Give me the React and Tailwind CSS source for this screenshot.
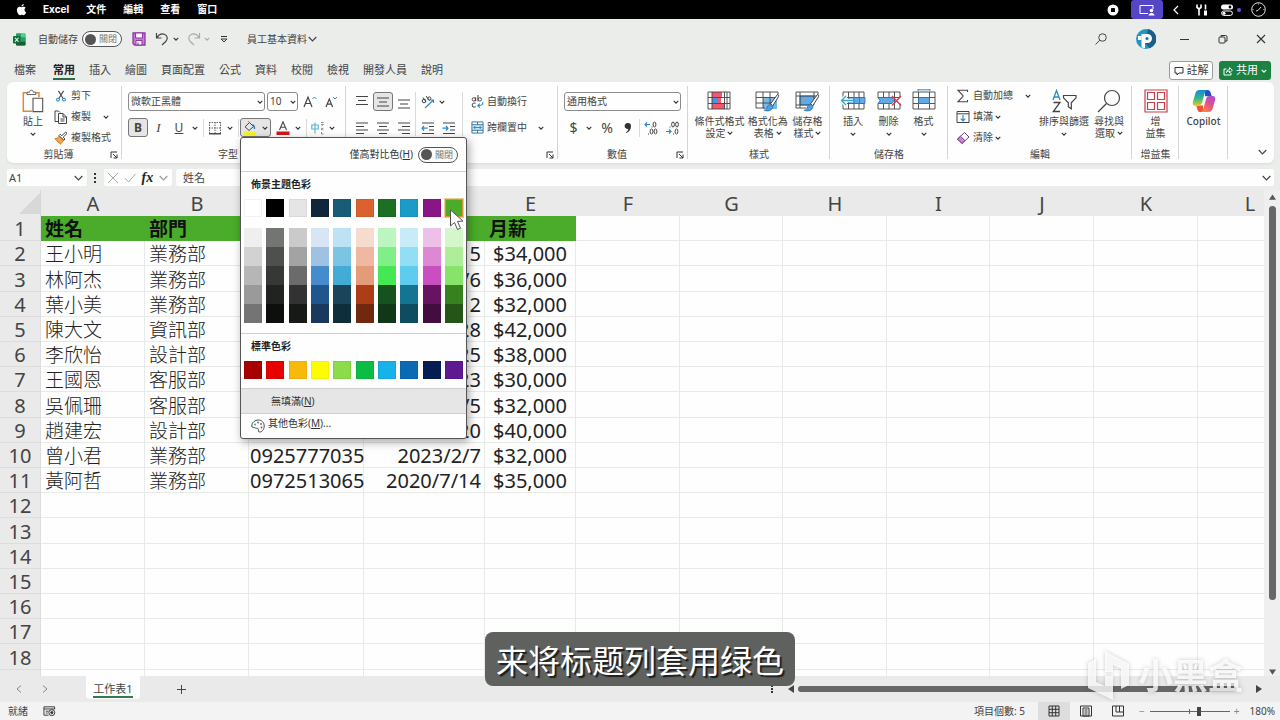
import React, { useState } from 'react';

const TABS = ['檔案', '常用', '插入', '繪圖', '頁面配置', '公式', '資料', '校閱', '檢視', '開發人員', '說明'];

const COLUMNS = [
  { name: 'A', width: 'w-[104px]' },
  { name: 'B', width: 'w-[104px]' },
  { name: 'C', width: 'w-[115px]' },
  { name: 'D', width: 'w-[121px]' },
  { name: 'E', width: 'w-[91px]' },
  { name: 'F', width: 'w-[104px]' },
  { name: 'G', width: 'w-[103px]' },
  { name: 'H', width: 'w-[104px]' },
  { name: 'I', width: 'w-[103px]' },
  { name: 'J', width: 'w-[104px]' },
  { name: 'K', width: 'w-[104px]' },
  { name: 'L', width: 'w-[104px]' },
];

const ROWS = [
  ['姓名', '部門', ' ', ' ', '月薪'],
  ['王小明', '業務部', '', '2021/3/15', '$34,000'],
  ['林阿杰', '業務部', '', '2020/5/6', '$36,000'],
  ['葉小美', '業務部', '', '2022/8/12', '$32,000'],
  ['陳大文', '資訊部', '', '2019/9/28', '$42,000'],
  ['李欣怡', '設計部', '', '2020/4/25', '$38,000'],
  ['王國恩', '客服部', '', '2023/6/23', '$30,000'],
  ['吳佩珊', '客服部', '', '2022/7/5', '$32,000'],
  ['趙建宏', '設計部', '', '2019/10/20', '$40,000'],
  ['曾小君', '業務部', '0925777035', '2023/2/7', '$32,000'],
  ['黃阿哲', '業務部', '0972513065', '2020/7/14', '$35,000'],
];

const THEME_COLORS = [
  { base: 'bg-[#ffffff]', shades: ['bg-[#efefef]', 'bg-[#d1d2d1]', 'bg-[#b5b6b5]', 'bg-[#999a99]', 'bg-[#737473]'] },
  { base: 'bg-[#000000]', shades: ['bg-[#737573]', 'bg-[#4e504e]', 'bg-[#363836]', 'bg-[#212321]', 'bg-[#0d0f0d]'] },
  { base: 'bg-[#e4e5e4]', shades: ['bg-[#c9cac9]', 'bg-[#a2a3a2]', 'bg-[#6a6b6a]', 'bg-[#313231]', 'bg-[#171917]'] },
  { base: 'bg-[#10263a]', shades: ['bg-[#d7e5f5]', 'bg-[#9fc2e3]', 'bg-[#468bcc]', 'bg-[#20568e]', 'bg-[#193a5c]'] },
  { base: 'bg-[#195c78]', shades: ['bg-[#bce2f3]', 'bg-[#7cc5e2]', 'bg-[#43acd6]', 'bg-[#194459]', 'bg-[#0e2e3b]'] },
  { base: 'bg-[#db622e]', shades: ['bg-[#f6dbcf]', 'bg-[#efb9a1]', 'bg-[#e49b79]', 'bg-[#ad3d16]', 'bg-[#70280f]'] },
  { base: 'bg-[#1c6f23]', shades: ['bg-[#bbf6c0]', 'bg-[#81ef88]', 'bg-[#45e752]', 'bg-[#16521d]', 'bg-[#103717]'] },
  { base: 'bg-[#1a9cc9]', shades: ['bg-[#c8ecf7]', 'bg-[#92dff3]', 'bg-[#5dccee]', 'bg-[#147592]', 'bg-[#0e4d60]'] },
  { base: 'bg-[#8a1587]', shades: ['bg-[#edc0e8]', 'bg-[#dc88d5]', 'bg-[#c94ebf]', 'bg-[#681262]', 'bg-[#440d40]'] },
  { base: 'bg-[#4aac2a]', shades: ['bg-[#d5f5cb]', 'bg-[#b0ed9b]', 'bg-[#88e36a]', 'bg-[#37811f]', 'bg-[#265518]'], selected: true },
];

const STANDARD_COLORS = [
  'bg-[#a60000]', 'bg-[#e60000]', 'bg-[#f7b90b]', 'bg-[#fdff00]', 'bg-[#8bdc4b]',
  'bg-[#0cbd45]', 'bg-[#16b2e8]', 'bg-[#0a6ab4]', 'bg-[#041d52]', 'bg-[#5f1991]',
];

/* ---------- icons ---------- */

const Chevron = ({ className = 'w-[6px] h-[6px]', color = '#333' }) => (
  <svg viewBox="0 0 8 8" className={`shrink-0 ${className}`} fill="none" stroke={color} strokeWidth="1.5">
    <path d="M1 2.5 4 5.5 7 2.5" />
  </svg>
);

const WideChevron = ({ className = 'w-[9px] h-[6px]', color = '#444' }) => (
  <svg viewBox="0 0 9 6" className={`shrink-0 ${className}`} fill="none" stroke={color} strokeWidth="1.2">
    <path d="M.7 1 4.5 4.8 8.3 1" />
  </svg>
);

const Launcher = () => (
  <svg viewBox="0 0 8 8" className="w-[8px] h-[8px]" fill="none" stroke="#333">
    <path d="M1 7V1h6M3 3l4 4M7 3.500V7H3.500" />
  </svg>
);

const AppleIcon = () => (
  <svg viewBox="0 0 24 24" className="w-[13px] h-[13px]" fill="#fff">
    <path d="M17.500 12.700c0-2.600 2.100-3.800 2.200-3.900-1.200-1.800-3.100-2-3.700-2-1.600-.2-3.100.9-3.900.9-.8 0-2-.9-3.400-.9C7 6.800 5.300 7.800 4.400 9.400c-1.900 3.200-.5 8 1.300 10.600.9 1.300 2 2.700 3.300 2.700 1.400-.1 1.900-.9 3.500-.9s2 .9 3.500.8c1.400 0 2.300-1.300 3.200-2.600 1-1.500 1.400-2.900 1.500-3-.1 0-3.200-1.200-3.200-4.300zM15 5.100c.7-.9 1.200-2.100 1.100-3.300-1 0-2.300.7-3 1.500-.7.800-1.300 2-1.100 3.200 1.100.1 2.300-.6 3-1.400z" />
  </svg>
);

const ExcelIcon = () => (
  <svg viewBox="0 0 26 26" className="w-[13px] h-[13px]">
    <path d="M8 1h15a2 2 0 0 1 2 2v20a2 2 0 0 1-2 2H8a2 2 0 0 1-2-2V3a2 2 0 0 1 2-2z" fill="#2aa463" />
    <path d="M6 1h10v8H6z" fill="#21a366" />
    <path d="M16 1h7a2 2 0 0 1 2 2v6h-9z" fill="#55d08c" />
    <path d="M6 17h19v6a2 2 0 0 1-2 2H8a2 2 0 0 1-2-2z" fill="#185c37" />
    <path d="M16 9h9v8h-9z" fill="#2f9e5c" />
    <rect y="6" width="15" height="15" rx="1.500" fill="#0f703b" />
    <path d="m4 9.500 7 8M11 9.500l-7 8" stroke="#fff" strokeWidth="2.200" />
  </svg>
);

const SaveIcon = () => (
  <svg viewBox="0 0 14 14" className="w-[14px] h-[14px]">
    <path d="M1 1h12v12H2.500L1 11.500z" fill="#c77bd6" stroke="#8d3aa0" strokeWidth="1.300" />
    <path d="M3.500 1h7v5h-7zM4 8.500h6V13H4z" fill="#faf3fb" stroke="#8d3aa0" />
    <path d="M6 10.500V13" stroke="#8d3aa0" />
  </svg>
);

const UndoIcon = ({ color, flip }) => (
  <svg viewBox="0 0 14 14" className={`w-[14px] h-[14px] ${flip ? '-scale-x-100' : ''}`} fill="none" stroke={color} strokeWidth="1.200">
    <path d="M1.500 1v5h5M1.800 5.700C4 2.500 7 1.300 9.800 2.500c3 1.300 3.200 4.800.7 7.200L7 13" />
  </svg>
);

const SearchIcon = ({ className = 'w-[12px] h-[12px]', stroke = 2 }) => (
  <svg viewBox="0 0 24 24" className={className} fill="none" stroke="#444" strokeWidth={stroke}>
    <circle cx="15" cy="9" r="7.500" />
    <path d="M9.500 14.500 1 23" />
  </svg>
);

const PasteIcon = () => (
  <svg viewBox="0 0 24 26" className="w-[24px] h-[24px]" fill="none">
    <path d="M6 4H1.500v20H11" stroke="#e08a32" strokeWidth="1.600" />
    <path d="M14 4h4.500v5" stroke="#e08a32" strokeWidth="1.600" />
    <path d="M5.500 6V3.500h2.800c0-3 4-3 4 0H15V6z" stroke="#555" fill="#fff" />
    <path d="M12 10h10.500v14.500H12z" stroke="#555" fill="#fff" strokeWidth="1.200" />
  </svg>
);

const CutIcon = () => (
  <svg viewBox="0 0 14 14" className="w-[12px] h-[14px]" fill="none">
    <path d="M4 1l5.500 9M10 1 4.500 10" stroke="#444" strokeWidth="1.200" />
    <circle cx="3.500" cy="11.200" r="1.700" stroke="#2b8ac9" strokeWidth="1.200" />
    <circle cx="10.500" cy="11.200" r="1.700" stroke="#2b8ac9" strokeWidth="1.200" />
  </svg>
);

const CopyIcon = () => (
  <svg viewBox="0 0 14 14" className="w-[14px] h-[14px]" fill="none" stroke="#444">
    <path d="M4 11.500H1V1h3.500L6 2.500M4.500 3.500H9L12.500 7v6.500h-8zM9 3.500V7h3.500M6.500 9h4M6.500 11h4" />
  </svg>
);

const PainterIcon = () => (
  <svg viewBox="0 0 14 14" className="w-[14px] h-[14px]" fill="none">
    <path d="M1 7.500c2 0 3.500-1 4.500-2.500l4 4C8.500 11 7.500 12.500 6.500 13c-1-.5-4-3-5.500-5.500z" fill="#f4a44c" stroke="#d07a25" />
    <path d="M5 4.500 9.800 9.300 11 8 9.200 6.200 13 2.400 11.600 1 7.800 4.800 6.300 3.200z" fill="#fff" stroke="#444" />
  </svg>
);

const BordersIcon = () => (
  <svg viewBox="0 0 14 14" className="w-[14px] h-[14px]" fill="none" stroke="#666">
    <path d="M1.500 1v12M7 1v12M12.500 1v12M1 1.500h12M1 7h12" strokeDasharray="1.500 1" />
    <path d="M1 12.800h12" stroke="#333" strokeWidth="1.300" />
  </svg>
);

const FillIcon = () => (
  <svg viewBox="0 0 14 14" className="w-[14px] h-[14px]" fill="none">
    <path d="M2 5.800 6.500 1.500l4 4-4.500 4zM6.500 1.500 5.500.5" stroke="#444" />
    <path d="M9.500 3.500c1.500.5 2.200 1.800 2 4.500" stroke="#2b7cc0" strokeWidth="1.300" />
    <path d="M1 10.500h12v3.500H1z" fill="#f3f52a" />
  </svg>
);

const FontColorIcon = () => (
  <svg viewBox="0 0 14 14" className="w-[14px] h-[14px]" fill="none">
    <path d="M3.500 9 7 .8 10.500 9M4.700 6.300h4.600" stroke="#444" strokeWidth="1.100" />
    <path d="M.5 10.500h13v3.500H.5z" fill="#d3151c" />
  </svg>
);

const PhoneticIcon = () => (
  <svg viewBox="0 0 14 14" className="w-[14px] h-[14px]" fill="none">
    <path d="M.8 4h6.500v4H.8zM4 1.500v11" stroke="#5aaedb" strokeWidth="1.100" />
    <path d="M10 1.500h2.500M10 3.500h2.500l-2 1.500M10 7l2.500 2M12.500 7 10 9M10.500 11v2h2" stroke="#777" strokeWidth=".8" />
  </svg>
);

const LINES = {
  top: 'M1 1.500h12M3 5.500h8M1 9.500h12',
  middle: 'M1 3h12M3 7h8M1 11h12',
  bottom: 'M1 5h12M3 9h8M1 13h12',
  left: 'M1 2h12M1 5.500h8M1 9h12M1 12.500h8',
  center: 'M1 2h12M3 5.500h8M1 9h12M3 12.500h8',
  right: 'M1 2h12M5 5.500h8M1 9h12M5 12.500h8',
};

const LinesIcon = ({ kind }) => (
  <svg viewBox="0 0 14 14" className="w-[14px] h-[14px]" fill="none" stroke="#444" strokeWidth="1.100">
    <path d={LINES[kind]} />
  </svg>
);

const IndentIcon = ({ out }) => (
  <svg viewBox="0 0 14 14" className="w-[14px] h-[14px]" fill="none">
    <path d="M1 2h12M8 5.500h5M8 9h5M1 12.500h12" stroke="#444" strokeWidth="1.100" />
    <path d={out ? 'M6.500 7.200H1M3 5 1 7.200l2 2.300' : 'M.5 7.200H6M4 5l2 2.200-2 2.300'} stroke="#2b8ac9" strokeWidth="1.200" />
  </svg>
);

const OrientationIcon = () => (
  <svg viewBox="0 0 14 14" className="w-[14px] h-[14px]" fill="none">
    <circle cx="3" cy="6" r="1.800" stroke="#444" />
    <path d="M2 2.500 5 7M5 1l3.500 4.500" stroke="#444" />
    <circle cx="8.300" cy="3.500" r="1.600" stroke="#444" />
    <path d="M4 13 12.500 5M9.500 5h3v3" stroke="#2b8ac9" strokeWidth="1.100" />
  </svg>
);

const WrapIcon = () => (
  <svg viewBox="0 0 14 14" className="w-[13px] h-[13px]" fill="none">
    <circle cx="3" cy="4.700" r="1.800" stroke="#444" />
    <path d="M5 2.500v4.200M7.500 0v6.700" stroke="#444" strokeWidth="1.100" />
    <circle cx="9.500" cy="4.700" r="1.800" stroke="#444" />
    <path d="M5 9C3.500 8 1.300 8.700 1.300 10.800S3.500 13.600 5 12.500" stroke="#444" strokeWidth="1.100" />
    <path d="M12.500 7.500c.8 2.500-.5 4-5 4M9.500 9.300 7.300 11.500l2.200 2" stroke="#2b8ac9" strokeWidth="1.200" />
  </svg>
);

const MergeIcon = () => (
  <svg viewBox="0 0 14 14" className="w-[13px] h-[13px]" fill="none">
    <path d="M1 4h12v6H1z" fill="#cfe7f6" />
    <path d="M1 1h12v12H1zM1 4h12M1 10h12M7 1v3M7 10v3" stroke="#2d6f99" />
    <path d="M3 7h8M4.500 5.500 3 7l1.500 1.500M9.500 5.500 11 7 9.500 8.500" stroke="#2b7cc0" />
  </svg>
);

const DecimalIcon = ({ more }) => (
  <svg viewBox="0 0 14 14" className="w-[14px] h-[14px]" fill="none">
    <path d={more ? 'M6 3.500H1M3 1.500 1 3.500l2 2' : 'M1 10.500h5M4 8.500l2 2-2 2'} stroke="#2b8ac9" strokeWidth="1.200" />
    <ellipse cx={more ? 10.500 : 8} cy="3.500" rx="1.400" ry="2.500" stroke="#444" />
    <ellipse cx={more ? 7.500 : 12} cy={more ? 10.500 : 3.500} rx="1.400" ry="2.500" stroke="#444" />
    <ellipse cx="11.500" cy="10.500" rx="1.400" ry="2.500" stroke="#444" />
    <path d={more ? 'M8 5.500v1M4.500 12.500v1' : 'M5 5.500v1M8.500 12.500v1'} stroke="#444" />
  </svg>
);

const GRID_LINES = 'M1 3h22v17H1zM1 8.500h22M1 14.500h22M6.500 3v17M17.500 3v17';

const Brush = () => (
  <>
    <path d="M22.500 5.500c1.200.6 1.500 1.300 1 2.200l-5.700 9-2.300-1.800z" fill="#fff" stroke="#444" />
    <path d="M15.500 15.500c-2.500.2-3.500 2-3.500 4-.8 1-1.800 1.500-2.800 1.700 3 1.500 8.500.8 8.800-4z" fill="#4d9fe0" stroke="#2b6fae" strokeWidth=".8" />
  </>
);

const ConditionalIcon = () => (
  <svg viewBox="0 0 24 24" className="w-[24px] h-[24px]" fill="none">
    <path d="M5 3h10v5.500H5zM5 14.500h12.500V20H5z" fill="#f0596d" />
    <path d="M5 8.500h5v6H5z" fill="#4d8fe0" />
    <path d="M10 8.500h4v6h-4z" fill="#f0596d" />
    <path d="M1 3h22v17H1zM1 8.500h22M1 14.500h22M5 3v17M17.500 3v17M20 3v17" stroke="#444" strokeWidth=".9" />
  </svg>
);

const FormatTableIcon = () => (
  <svg viewBox="0 0 25 24" className="w-[25px] h-[24px]" fill="none">
    <path d="M8 8.500h14V20H8z" fill="#79b8ea" />
    <path d="M1 3h22v5M1 3v16h9M1 8.500h20M1 14h16M8 3v16M15 3v12" stroke="#444" strokeWidth=".9" />
    <Brush />
  </svg>
);

const CellStyleIcon = () => (
  <svg viewBox="0 0 25 24" className="w-[25px] h-[24px]" fill="none">
    <path d="M5 7h14v9H5z" fill="#62aae6" stroke="#2b6fae" strokeWidth=".8" />
    <path d="M1 3h22v5M1 3v16h10M1 7h22M1 16h15M5 3v16M19 3v6" stroke="#444" strokeWidth=".9" />
    <Brush />
  </svg>
);

const InsertCellsIcon = () => (
  <svg viewBox="0 0 26 24" className="w-[26px] h-[24px]" fill="none">
    <path d="M3 3h21v17H3zM3 8.500h21M3 14.500h21M8.500 3v17M14 3v17M19 3v17" stroke="#444" strokeWidth=".9" />
    <path d="M9 8.500h16v6H9z" fill="#62aae6" stroke="#2b6fae" strokeWidth=".8" />
    <path d="M14 8.500v6M19.500 8.500v6" stroke="#2b6fae" strokeWidth=".8" />
    <path d="M13 11.500H1.500M6 7l-4.500 4.500L6 16" stroke="#fff" strokeWidth="3.500" />
    <path d="M13 11.500H1.500M6 7l-4.500 4.500L6 16" stroke="#35a5cf" strokeWidth="1.300" />
  </svg>
);

const DeleteCellsIcon = () => (
  <svg viewBox="0 0 26 24" className="w-[26px] h-[24px]" fill="none">
    <path d="M2 3h22v5.500M2 3v5.500h22M2 14.500V20h22v-5.500M2 14.500h14M7.500 3v17M13 3v17M18.500 3v17" stroke="#444" strokeWidth=".9" />
    <path d="M2 8.500h14l2 3-2 3H2l2-3z" fill="#62aae6" stroke="#2b6fae" strokeWidth=".8" />
    <path d="m16 7 9 9.500M25 7l-9 9.500" stroke="#d63c4b" strokeWidth="1.400" />
  </svg>
);

const FormatCellsIcon = () => (
  <svg viewBox="0 0 24 24" className="w-[24px] h-[24px]" fill="none">
    <path d={GRID_LINES} stroke="#444" strokeWidth=".9" />
    <path d="M6.500 8.500h11v6h-11z" fill="#62aae6" stroke="#2b6fae" strokeWidth=".8" />
    <path d="M6 .8h12M6 0v1.800M18 0v1.800" stroke="#2b8ac9" />
  </svg>
);

const SumIcon = () => (
  <svg viewBox="0 0 14 14" className="w-[14px] h-[14px]" fill="none" stroke="#444" strokeWidth="1.100">
    <path d="M11.500 3V1.200H2L7.200 7 2 12.800h9.500V11" />
  </svg>
);

const FillDownIcon = () => (
  <svg viewBox="0 0 14 14" className="w-[14px] h-[14px]" fill="none">
    <path d="M1 1.500h12v11H1zM1 3.800h12" stroke="#444" />
    <path d="M7 5v6M4.700 8.700 7 11l2.300-2.300" stroke="#2b8ac9" strokeWidth="1.200" />
  </svg>
);

const EraserIcon = () => (
  <svg viewBox="0 0 14 14" className="w-[14px] h-[14px]">
    <path d="M8.500 1.500 13 6l-7 6.500L1.500 8z" fill="#fff" stroke="#7b3a91" />
    <path d="m4.500 5.300 4.500 4.400-3 2.800L1.500 8z" fill="#c987d8" stroke="#7b3a91" />
  </svg>
);

const SortIcon = () => (
  <svg viewBox="0 0 26 24" className="w-[26px] h-[24px]" fill="none">
    <path d="M2 11 5.500 1.500 9 11M3.200 8h4.600" stroke="#2b8ac9" strokeWidth="1.300" />
    <path d="M2.500 13.500H9L2.300 22.500H9" stroke="#444" strokeWidth="1.300" />
    <path d="M12.500 6.500H25v2.300l-4.700 5v6l-3-2v-4l-4.800-5z" stroke="#444" strokeWidth="1.200" />
  </svg>
);

const AddinsIcon = () => (
  <svg viewBox="0 0 24 24" className="w-[24px] h-[24px]" fill="none" stroke="#c4414b" strokeWidth="1.200">
    <path d="M1 1h22v22H1z" />
    <path d="M3.500 3.500h7v7h-7zM13.500 3.500h7v7h-7zM3.500 13.500h7v7h-7zM13.500 13.500h7v7h-7z" />
  </svg>
);

const CopilotIcon = () => (
  <svg viewBox="0 0 24 24" className="w-[24px] h-[24px]">
    <defs>
      <linearGradient id="cpA" x1="0.300" y1="0" x2="0.300" y2="1">
        <stop offset="0" stopColor="#1b86e0" />
        <stop offset=".5" stopColor="#2fb58a" />
        <stop offset="1" stopColor="#eecb24" />
      </linearGradient>
      <linearGradient id="cpB" x1="1" y1="0" x2="0.200" y2="1">
        <stop offset="0" stopColor="#9a4fe8" />
        <stop offset=".5" stopColor="#e2508c" />
        <stop offset="1" stopColor="#f6893c" />
      </linearGradient>
    </defs>
    <path d="M13 1h2.500c1.800 0 2.600 1 3.100 2.600L19.800 7.200H13z" fill="#2450c8" />
    <path d="M11 23H8.500c-1.800 0-2.600-1-3.100-2.600L4.200 16.500H11z" fill="#f0532f" />
    <path d="M7.500 1h8c-1.700.3-2.300 1.500-2.800 3.300L10 13.800c-.6 2-1.600 3.200-3.800 3.200H3.500C1 17 .3 15 .9 12.800L3.500 4c.7-2 2-3 4-3z" fill="url(#cpA)" />
    <path d="M16.500 23h-8c1.700-.3 2.300-1.500 2.800-3.300L14 10.200c.6-2 1.600-3.200 3.800-3.200h2.700c2.500 0 3.200 2 2.600 4.200L20.500 20c-.7 2-2 3-4 3z" fill="url(#cpB)" />
  </svg>
);

const PaletteIcon = () => (
  <svg viewBox="0 0 14 14" className="w-[14px] h-[14px]" fill="none">
    <path d="M4.500 9C3.500 8 1 9.500.8 7 .7 3.500 4 1 7.500 1c3.200 0 5.700 2.500 5.700 6 0 3.800-2.500 6-4.500 6-2.500 0-.5-2.500-1.700-3.500C6.200 8.800 5.300 9.800 4.500 9z" stroke="#444" />
    <circle cx="4" cy="5.500" r=".9" fill="#3a9d55" />
    <circle cx="7" cy="3.500" r=".9" fill="#2b7cc0" />
    <circle cx="10" cy="5" r=".9" fill="#d3413b" />
    <circle cx="10.500" cy="8.500" r=".9" fill="#8d3aa0" />
  </svg>
);

/* ---------- small parts ---------- */

const Toggle = ({ id, label }) => (
  <span className="relative flex items-center w-[40px] h-[16px] rounded-full border border-[#555] bg-[#fbfcfb] text-[9px] text-[#777]">
    <input id={id} type="checkbox" aria-label={label} className="absolute inset-0 w-full h-full appearance-none rounded-full" />
    <span className="w-[11px] h-[11px] ml-[2px] mr-[3px] rounded-full bg-[#555]" />
    <span>關閉</span>
  </span>
);

const Sep = ({ className = 'h-[18px]' }) => <span className={`w-px bg-[#d8d9d8] ${className}`} />;

const Group = ({ label, width, launcher, children }) => (
  <section className={`relative shrink-0 flex flex-col pt-[3px] ${width}`}>
    <div className="h-[63px] flex items-start">{children}</div>
    <div className="h-[12px] flex items-center text-[10px] leading-[12px] text-[#444]">
      <span className="flex-1 text-center">{label}</span>
      {launcher && <button className="w-[12px] pt-[2px]" aria-label={`${label}設定`}><Launcher /></button>}
    </div>
    <span className="absolute right-0 top-[4px] bottom-[4px] w-px bg-[#d4d5d4]" />
  </section>
);

const BigButton = ({ icon, lines, width, chevron }) => (
  <button className={`flex flex-col items-center pt-[4px] text-[10px] leading-[12px] whitespace-nowrap ${width}`}>
    <span className="h-[24px] mb-[2px] flex items-center">{icon}</span>
    {lines.map((line, i) => (
      <span key={line} className="flex items-center gap-[2px]">
        {line}
        {chevron === 'inline' && i === lines.length - 1 && <Chevron />}
      </span>
    ))}
    {chevron === 'below' && <span className="h-[14px] flex items-center"><Chevron /></span>}
  </button>
);

const SmallButton = ({ icon, label, chevron, far }) => (
  <button className="h-[21px] flex items-center text-[10px]">
    <span className="w-[16px] flex justify-center">{icon}</span>
    <span className="ml-[2px] mr-[2px]">{label}</span>
    {chevron && <span className={far ? 'pl-[10px]' : ''}><Chevron /></span>}
  </button>
);

const IconButton = ({ width, label, active, children }) => (
  <button
    aria-label={label}
    className={`h-[19px] flex items-center justify-center ${width} ${active ? 'rounded-[3px] border border-[#777] bg-[#e4e5e4]' : ''}`}
  >
    {children}
  </button>
);

const SelectBox = ({ width, label, value }) => (
  <span className={`relative flex items-center h-[19px] ${width}`}>
    <select
      aria-label={label}
      className="w-full h-full appearance-none rounded-[3px] border border-[#8a8b8a] bg-[#fdfefd] pl-[2px] text-[10px] leading-[17px] text-[#444]"
      defaultValue={value}
    >
      <option>{value}</option>
    </select>
    <span className="absolute right-[2px] pointer-events-none"><Chevron /></span>
  </span>
);

const SectionTitle = ({ children }) => (
  <h3 className="h-[24px] mb-[3px] pl-[10px] flex items-center text-[10px] font-bold text-[#222]">{children}</h3>
);

const FillMenu = () => (
  <div className="absolute left-0 top-full z-30 w-[227px] rounded-[3px] border border-[#555] bg-[#fdfefd] shadow-[2px_3px_10px_rgba(0,0,0,0.35)] text-left text-[10px] text-[#333]">
    <div className="h-[33px] pr-[8px] flex items-center justify-end gap-[5px]">
      <label htmlFor="contrast">僅高對比色(<u>H</u>)</label>
      <Toggle id="contrast" />
    </div>
    <div className="border-t border-[#cfd0cf]">
      <SectionTitle>佈景主題色彩</SectionTitle>
      <div className="px-[3px] pb-[10px] flex justify-between">
        {THEME_COLORS.map((color) => (
          <div key={color.base} className="w-[18px] flex flex-col gap-[11px]">
            <button
              aria-label="佈景主題色彩"
              className={`h-[18px] border ${color.base} ${color.selected ? 'border-[#e0922f] outline outline-[#f0c98c]' : 'border-black/5'}`}
            />
            <div className="flex flex-col">
              {color.shades.map((shade) => (
                <button key={shade} aria-label="色彩濃淡" className={`h-[19px] ${shade}`} />
              ))}
            </div>
          </div>
        ))}
      </div>
    </div>
    <div className="border-t border-[#cfd0cf]">
      <SectionTitle>標準色彩</SectionTitle>
      <div className="px-[3px] pb-[9px] flex justify-between">
        {STANDARD_COLORS.map((color) => (
          <button key={color} aria-label="標準色彩" className={`w-[18px] h-[18px] border border-black/5 ${color}`} />
        ))}
      </div>
    </div>
    <button className="w-full h-[25px] pl-[30px] flex items-center border-t border-[#cfd0cf] bg-[#e5e6e5]">
      無填滿(<u>N</u>)
    </button>
    <button className="w-full h-[25px] pl-[10px] flex items-center gap-[3px] border-t border-[#cfd0cf]">
      <PaletteIcon />
      <span className="pb-[6px]">其他色彩(<u>M</u>)...</span>
    </button>
    <svg viewBox="0 0 16 22" className="absolute left-[208px] top-[71px] w-[16px] h-[22px]">
      <path d="M1.500 1v16l4-3.500 3 7 3-1.300-3-6.700 5.500-.5z" fill="#fff" stroke="#555" />
    </svg>
  </div>
);

/* ---------- page sections ---------- */

const MacBar = () => (
  <header className="h-[19px] shrink-0 flex items-center bg-black pl-[15px] text-[10px] font-bold text-white">
    <AppleIcon />
    <nav className="ml-[15px] flex items-center gap-[17px]">
      <span className="font-[Inter]">Excel</span>
      <span>文件</span>
      <span>編輯</span>
      <span>查看</span>
      <span>窗口</span>
    </nav>
    <div className="ml-auto pr-[14px] flex items-center">
      <svg viewBox="0 0 12 12" className="w-[12px] h-[12px] mr-[12px]">
        <circle cx="6" cy="6" r="5.500" fill="#fff" />
        <rect x="4" y="4" width="4" height="4" rx=".6" fill="#000" />
      </svg>
      <span className="w-[32px] h-[19px] rounded-[3px] bg-[#5546c8] flex items-center justify-center">
        <svg viewBox="0 0 16 12" className="w-[16px] h-[12px]" fill="none">
          <path d="M9 9.500H1v-8h13V5" stroke="#fff" />
          <circle cx="12.500" cy="6.500" r="1.800" fill="#fff" />
          <path d="M9.500 11.500c0-3.500 6-3.500 6 0z" fill="#fff" />
        </svg>
      </span>
      <svg viewBox="0 0 6 10" className="w-[6px] h-[10px] ml-[10px]" fill="none" stroke="#fff" strokeWidth="1.200">
        <path d="M5 1 1 5l4 4" />
      </svg>
      <svg viewBox="0 0 12 12" className="w-[12px] h-[12px] ml-[17px]" fill="none" stroke="#fff" strokeWidth="1.600">
        <path d="M1 .5v3l2 1.500 2-1.500v-3M3 5v6.500M9.500.5v5" />
        <path d="M9.500 6.500v5" strokeWidth="3" />
      </svg>
      <svg viewBox="0 0 12 12" className="w-[12px] h-[12px] ml-[13px]">
        <rect y=".5" width="12" height="5" rx="2.500" fill="#fff" />
        <rect x=".6" y="7" width="10.800" height="4.400" rx="2.200" fill="none" stroke="#fff" />
        <circle cx="9" cy="3" r="1.400" fill="#000" />
        <circle cx="3" cy="9.200" r="1.500" fill="#fff" />
      </svg>
      <span className="w-[4px] h-[4px] ml-[4px] mr-[10px] rounded-full bg-[#6355e0]" />
      <svg viewBox="0 0 15 15" className="w-[15px] h-[15px]" fill="none" stroke="#ddd">
        <circle cx="7.500" cy="7.500" r="6.800" />
        <path d="M10 5 7 8.500M7 8.500l-2 .5M7.500 1.500v1M13.500 7.500h-1M1.500 7.500h1" />
      </svg>
    </div>
  </header>
);

const TitleBar = () => (
  <div className="h-[40px] shrink-0 flex items-center pl-[13px] pr-[14px] text-[10px]">
    <ExcelIcon />
    <label htmlFor="autosave" className="ml-[12px] mr-[4px]">自動儲存</label>
    <Toggle id="autosave" />
    <button aria-label="儲存" className="ml-[10px]"><SaveIcon /></button>
    <button aria-label="復原" className="ml-[9px] flex items-center gap-[4px]"><UndoIcon color="#444" /><Chevron /></button>
    <button aria-label="重做" className="ml-[8px] flex items-center gap-[3px]"><UndoIcon color="#aaa" flip /><Chevron color="#aaa" /></button>
    <button aria-label="自訂工具列" className="ml-[10px]">
      <svg viewBox="0 0 8 8" className="w-[8px] h-[8px]" fill="none" stroke="#333"><path d="M1 1.500h6M1 4l3 3 3-3z" /></svg>
    </button>
    <button className="ml-[19px] flex items-center gap-[1px]">員工基本資料<WideChevron /></button>
    <div className="ml-auto flex items-center">
      <button aria-label="搜尋"><SearchIcon /></button>
      <svg viewBox="0 0 20 20" className="w-[20px] h-[20px] ml-[29px] mr-[24px]">
        <circle cx="10" cy="10" r="10" fill="#2397bf" />
        <path d="M12 0a10 10 0 0 1 2 19.200L9 14z" fill="#1c5f86" />
        <path d="M5.500 5h6a4.500 4.500 0 0 1 0 9H9v5c-2 0-3.500-.5-3.500-1z" fill="#fff" />
        <circle cx="11" cy="9.500" r="1.600" fill="#1c7ea5" />
        <path d="M2 7h3.500v4H2z" fill="#fff" />
      </svg>
      <button aria-label="最小化" className="w-[9px] h-[9px] flex items-center"><span className="w-full h-px bg-[#333]" /></button>
      <button aria-label="還原" className="ml-[29px]">
        <svg viewBox="0 0 10 10" className="w-[10px] h-[10px]" fill="none" stroke="#333"><rect x="1" y="3" width="6" height="6" rx="1" /><path d="M3 3V1.500h4.500q1.500 0 1.500 1.500v4H7" /></svg>
      </button>
      <button aria-label="關閉" className="ml-[28px]">
        <svg viewBox="0 0 10 10" className="w-[10px] h-[10px]" stroke="#333" strokeWidth="1.100"><path d="m1 1 8 8M9 1 1 9" /></svg>
      </button>
    </div>
  </div>
);

const TabRow = () => {
  const [active, setActive] = useState('常用');
  return (
    <div className="h-[23px] shrink-0 flex items-start pl-[14px] pr-[9px]">
      <nav className="flex gap-[14px] text-[11px]">
        {TABS.map((tab) => (
          <button
            key={tab}
            onClick={() => setActive(tab)}
            className={`h-[21px] leading-[22px] border-b-2 first:mr-[3px] ${tab === active ? 'border-[#2e6b45] font-bold text-[#222]' : 'border-transparent'}`}
          >
            {tab}
          </button>
        ))}
      </nav>
      <div className="ml-auto mt-[2px] flex gap-[6px] text-[11px]">
        <button className="w-[44px] h-[19px] flex items-center justify-center gap-[3px] rounded-[3px] border border-[#9a9b9a] bg-[#fdfefd]">
          <svg viewBox="0 0 10 10" className="w-[10px] h-[10px]" fill="none" stroke="#333"><path d="M1 1.500h8v5.500H5L3 9V7H1z" /></svg>
          註解
        </button>
        <button className="w-[52px] h-[19px] flex items-center justify-center gap-[3px] rounded-[3px] bg-[#1b8242] text-white">
          <svg viewBox="0 0 10 10" className="w-[10px] h-[10px]" fill="none" stroke="#fff"><path d="M3.500 3H1v6h7V7M3.500 6.500C3.500 4.500 5 3.500 6.500 3.500V1.500L9.300 4.200 6.500 7V5C5 5 4.200 5.500 3.500 6.500z" /></svg>
          共用
          <Chevron color="#fff" />
        </button>
      </div>
    </div>
  );
};

const Ribbon = () => (
  <div className="relative z-20 h-[81px] shrink-0 ml-[7px] mr-[6px] flex rounded-[6px] bg-[#fdfefd] shadow-[0_1px_2px_rgba(0,0,0,0.08)]">
    <Group label="剪貼簿" width="w-[115px]" launcher>
      <BigButton icon={<PasteIcon />} lines={['貼上']} width="w-[46px] pl-[6px]" chevron="below" />
      <div className="flex flex-col">
        <SmallButton icon={<CutIcon />} label="剪下" />
        <SmallButton icon={<CopyIcon />} label="複製" chevron far />
        <SmallButton icon={<PainterIcon />} label="複製格式" />
      </div>
    </Group>

    <Group label="字型" width="w-[224px]" launcher>
      <div className="pl-[6px] pt-[7px] flex flex-col gap-[7px]">
        <div className="flex items-center">
          <SelectBox label="字型" value="微軟正黑體" width="w-[137px] mr-[2px]" />
          <SelectBox label="字型大小" value="10" width="w-[31px]" />
          <IconButton label="放大字型" width="w-[23px]">
            <svg viewBox="0 0 14 14" className="w-[14px] h-[14px]" fill="none"><path d="M1 12 5 2l4 10M2.500 8.500h5" stroke="#444" strokeWidth="1.200" /><path d="m9.500 4 2-2 2 2" stroke="#2b8ac9" /></svg>
          </IconButton>
          <IconButton label="縮小字型" width="w-[20px]">
            <svg viewBox="0 0 14 14" className="w-[14px] h-[14px]" fill="none"><path d="M2 12l3.300-8L8.600 12M3.200 9.200h4.200" stroke="#444" strokeWidth="1.200" /><path d="m9 2 2 2 2-2" stroke="#2b8ac9" /></svg>
          </IconButton>
        </div>
        <div className="flex items-center text-[12px]">
          <IconButton label="粗體" width="w-[20px]" active><b>B</b></IconButton>
          <IconButton label="斜體" width="w-[21px]"><i className="font-['Liberation_Serif'] text-[13px]">I</i></IconButton>
          <IconButton label="底線" width="w-[20px]"><u>U</u></IconButton>
          <IconButton label="底線樣式" width="w-[11px]"><Chevron /></IconButton>
          <Sep className="h-[18px] mx-[3px]" />
          <IconButton label="框線" width="w-[16px]"><BordersIcon /></IconButton>
          <IconButton label="框線樣式" width="w-[13px]"><Chevron /></IconButton>
          <Sep className="h-[18px] ml-[2px] mr-px" />
          <div className="relative">
            <button aria-label="填滿色彩" className="w-[31px] h-[19px] flex items-center justify-center gap-[5px] rounded-[3px] border border-[#777] bg-[#e4e5e4]">
              <FillIcon /><Chevron />
            </button>
            <FillMenu />
          </div>
          <IconButton label="字型色彩" width="w-[24px]"><FontColorIcon /></IconButton>
          <IconButton label="字型色彩選單" width="w-[6px]"><Chevron /></IconButton>
          <Sep className="h-[18px] ml-[5px] mr-[3px]" />
          <IconButton label="注音" width="w-[16px]"><PhoneticIcon /></IconButton>
          <IconButton label="注音選單" width="w-[12px]"><Chevron /></IconButton>
        </div>
      </div>
    </Group>

    <Group label="對齊方式" width="w-[212px]" launcher>
      <div className="pt-[7px] pl-[6px] flex">
        <div className="grid grid-cols-3 self-start gap-x-px gap-y-[7px]">
          <IconButton label="靠上對齊" width="w-[20px]"><LinesIcon kind="top" /></IconButton>
          <IconButton label="置中對齊" width="w-[20px]" active><LinesIcon kind="middle" /></IconButton>
          <IconButton label="靠下對齊" width="w-[20px]"><LinesIcon kind="bottom" /></IconButton>
          <IconButton label="靠左對齊" width="w-[20px]"><LinesIcon kind="left" /></IconButton>
          <IconButton label="置中" width="w-[20px]"><LinesIcon kind="center" /></IconButton>
          <IconButton label="靠右對齊" width="w-[20px]"><LinesIcon kind="right" /></IconButton>
        </div>
        <Sep className="h-[44px] ml-px mr-px" />
        <div className="w-[45px] flex flex-col gap-[7px]">
          <div className="flex">
            <IconButton label="方向" width="w-[21px]"><OrientationIcon /></IconButton>
            <IconButton label="方向選單" width="w-[8px]"><Chevron /></IconButton>
          </div>
          <div className="flex">
            <IconButton label="減少縮排" width="w-[21px]"><IndentIcon out /></IconButton>
            <IconButton label="增加縮排" width="w-[21px]"><IndentIcon /></IconButton>
          </div>
        </div>
        <Sep className="h-[44px]" />
        <div className="pl-[8px] flex flex-col gap-[7px] text-[10px]">
          <button className="h-[19px] flex items-center gap-[3px]"><WrapIcon />自動換行</button>
          <button className="h-[19px] flex items-center gap-[3px]"><MergeIcon />跨欄置中<span className="pl-[8px]"><Chevron /></span></button>
        </div>
      </div>
    </Group>

    <Group label="數值" width="w-[130px]" launcher>
      <div className="pt-[7px] pl-[6px] flex flex-col gap-[7px]">
        <SelectBox label="數值格式" value="通用格式" width="w-[117px]" />
        <div className="flex items-center text-[14px]">
          <IconButton label="會計格式" width="w-[19px]">$</IconButton>
          <IconButton label="會計格式選單" width="w-[12px]"><Chevron /></IconButton>
          <IconButton label="百分比" width="w-[24px]">%</IconButton>
          <IconButton label="千分位" width="w-[18px]">
            <svg viewBox="0 0 8 12" className="w-[8px] h-[12px]"><path d="M4 1a3 3 0 0 1 3 3c0 3.500-2 6-4.500 7L2 10.200C3.500 9.300 4.300 8 4.300 6.900A3 3 0 1 1 4 1z" fill="#333" /></svg>
          </IconButton>
          <Sep className="h-[18px] ml-[2px] mr-[3px]" />
          <IconButton label="增加小數位數" width="w-[16px]"><DecimalIcon more /></IconButton>
          <IconButton label="減少小數位數" width="w-[25px]"><DecimalIcon /></IconButton>
        </div>
      </div>
    </Group>

    <Group label="樣式" width="w-[142px]">
      <BigButton icon={<ConditionalIcon />} lines={['條件式格式', '設定']} width="w-[64px]" chevron="inline" />
      <BigButton icon={<FormatTableIcon />} lines={['格式化為', '表格']} width="w-[34px]" chevron="inline" />
      <BigButton icon={<CellStyleIcon />} lines={['儲存格', '樣式']} width="w-[46px]" chevron="inline" />
    </Group>

    <Group label="儲存格" width="w-[118px]">
      <BigButton icon={<InsertCellsIcon />} lines={['插入']} width="w-[36px] ml-[5px]" chevron="below" />
      <BigButton icon={<DeleteCellsIcon />} lines={['刪除']} width="w-[35px]" chevron="below" />
      <BigButton icon={<FormatCellsIcon />} lines={['格式']} width="w-[35px]" chevron="below" />
    </Group>

    <Group label="編輯" width="w-[184px]">
      <div className="w-[86px] pl-[7px] flex flex-col">
        <SmallButton icon={<SumIcon />} label="自動加總" chevron far />
        <SmallButton icon={<FillDownIcon />} label="填滿" chevron />
        <SmallButton icon={<EraserIcon />} label="清除" chevron />
      </div>
      <BigButton icon={<SortIcon />} lines={['排序與篩選']} width="w-[60px]" chevron="below" />
      <BigButton icon={<SearchIcon className="w-[24px] h-[24px]" stroke={1.2} />} lines={['尋找與', '選取']} width="w-[30px]" chevron="inline" />
    </Group>

    <Group label="增益集" width="w-[47px]">
      <BigButton icon={<AddinsIcon />} lines={['增', '益集']} width="w-full" />
    </Group>

    <Group width="w-[49px]">
      <BigButton icon={<CopilotIcon />} lines={['Copilot']} width="w-full font-medium" />
    </Group>

    <button aria-label="摺疊功能區" className="ml-auto self-end mr-[7px] mb-[8px]"><WideChevron /></button>
  </div>
);

const FormulaBar = () => (
  <div className="h-[27px] shrink-0 flex items-center pl-[7px] pr-[6px] pt-[2px]">
    <div className="w-[80px] h-[17px] pl-[2px] pr-[4px] flex items-center rounded-[2px] bg-[#fdfefd]">
      <input aria-label="名稱方塊" defaultValue="A1" className="min-w-0 flex-1 bg-transparent text-[11px] leading-[17px]" />
      <WideChevron />
    </div>
    <svg viewBox="0 0 4 10" className="w-[4px] h-[10px] mx-[6px]" fill="#333"><path d="M1 0h2v2H1zM1 4h2v2H1zM1 8h2v2H1z" /></svg>
    <div className="w-[68px] h-[17px] ml-[1px] px-[4px] flex items-center justify-between rounded-[2px] bg-[#fdfefd]">
      <button aria-label="取消"><svg viewBox="0 0 10 10" className="w-[10px] h-[10px]" stroke="#aaa"><path d="m0 0 10 10M10 0 0 10" /></svg></button>
      <button aria-label="輸入"><svg viewBox="0 0 12 10" className="w-[12px] h-[10px]" fill="none" stroke="#aaa"><path d="m1 5 3.500 4L11.500 1" /></svg></button>
      <button className="font-['Liberation_Serif'] text-[14px] leading-[17px] font-bold italic text-[#222]">fx</button>
      <WideChevron color="#999" />
    </div>
    <div className="flex-1 h-[17px] ml-[4px] pl-[7px] pr-[3px] flex items-center rounded-[2px] bg-[#fdfefd]">
      <input aria-label="資料編輯列" defaultValue="姓名" className="min-w-0 flex-1 bg-transparent text-[11px] leading-[17px]" />
      <WideChevron />
    </div>
  </div>
);

const cellClass = (row, col) => {
  if (row === 0) return 'pl-[4px] bg-[#4aac2a] font-bold text-[#111]';
  if (col === 2) return 'pl-px';
  if (col === 3) return 'pr-[3px] text-right';
  if (col === 4) return 'pr-[8px] text-right';
  return 'pl-[4px] font-light';
};

const Sheet = () => (
  <div className="flex-1 min-h-0 flex">
    <div className="flex-1 min-w-0 overflow-hidden bg-[#fdfefd]">
      <table className="table-fixed w-[1302px] h-[505px] border-separate border-spacing-0 text-[20px] leading-[22px] text-[#222] whitespace-nowrap">
        <thead>
          <tr className="h-[26px] bg-[#e9eae9] text-[#444]">
            <th className="w-[41px] p-0 border-r border-[#d5d6d5]">
              <svg viewBox="0 0 20 20" className="w-[21px] h-[21px] ml-auto"><path d="M20 0v20H0z" fill="#d7d8d7" /></svg>
            </th>
            {COLUMNS.map((col) => (
              <th key={col.name} className={`p-0 pt-px font-normal ${col.width}`}>{col.name}</th>
            ))}
          </tr>
        </thead>
        <tbody>
          {Array.from({ length: 19 }, (_, r) => (
            <tr key={r}>
              <th className="p-0 pt-[2px] border-r border-b border-[#dcdddc] bg-[#e9eae9] font-normal text-[#444]">{r + 1}</th>
              {COLUMNS.map((col, c) => {
                const text = ROWS[r]?.[c];
                const border = r === 0 && text ? 'border-[#4aac2a]' : 'border-[#e8eae8]';
                return (
                  <td
                    key={col.name}
                    className={`p-0 pt-[2px] border-r border-b ${border} ${text ? cellClass(r, c) : ''} ${c < 2 || r === 0 ? 'text-[19px]' : ''}`}
                  >
                    {text}
                  </td>
                );
              })}
            </tr>
          ))}
        </tbody>
      </table>
    </div>
    <div className="w-[16px] flex flex-col items-center pt-[4px] pb-px bg-[#eeefee]">
      <svg viewBox="0 0 8 6" className="w-[7px] h-[6px]" fill="#555"><path d="M4 0l4 6H0z" /></svg>
      <span className="w-[7px] h-[394px] mt-[6px] rounded-full bg-[#666766]" />
      <svg viewBox="0 0 8 6" className="w-[7px] h-[6px] mt-auto" fill="#555"><path d="M0 0h8L4 6z" /></svg>
    </div>
  </div>
);

const SheetTabs = () => (
  <div className="h-[26px] shrink-0 flex items-center bg-[#e9eae9]">
    <button aria-label="上一張" className="ml-[16px]"><svg viewBox="0 0 6 8" className="w-[6px] h-[8px]" fill="none" stroke="#888"><path d="M5 .5 1 4l4 3.500" /></svg></button>
    <button aria-label="下一張" className="ml-[20px]"><svg viewBox="0 0 6 8" className="w-[6px] h-[8px]" fill="none" stroke="#888"><path d="M1 .5 5 4 1 7.500" /></svg></button>
    <button className="self-start w-[54px] h-[23px] ml-[38px] px-[7px] pt-[3px] rounded-b-[4px] bg-[#fdfefd] text-[11px] leading-[15px]">
      <span className="block border-b-2 border-[#2f7d4d]">工作表1</span>
    </button>
    <button aria-label="新增工作表" className="ml-[37px]"><svg viewBox="0 0 10 10" className="w-[9px] h-[9px]" stroke="#333"><path d="M5 0v10M0 5h10" /></svg></button>
    <div className="ml-auto pr-[18px] flex items-center">
      <svg viewBox="0 0 2 8" className="w-[2px] h-[8px] mr-[15px]" fill="#333"><path d="M0 0h2v2H0zM0 3h2v2H0zM0 6h2v2H0z" /></svg>
      <svg viewBox="0 0 6 8" className="w-[6px] h-[8px] mr-[4px]" fill="#444"><path d="M6 0v8L0 4z" /></svg>
      <span className="w-[439px] h-[6px] rounded-full bg-[#666766]" />
      <svg viewBox="0 0 6 8" className="w-[6px] h-[8px] ml-[19px]" fill="#444"><path d="M0 0v8l6-4z" /></svg>
    </div>
  </div>
);

const StatusBar = () => (
  <footer className="h-[18px] shrink-0 flex items-center pl-[8px] pr-[5px] bg-[#f2f3f2] text-[10px]">
    <span>就緒</span>
    <svg viewBox="0 0 14 12" className="w-[13px] h-[12px] ml-[15px]" fill="none" stroke="#333">
      <path d="M6 10.500H1v-9h11.500V4M1 3.800h11.500M3 6.200h3M3 8.200h2" />
      <circle cx="9.500" cy="7.800" r="3.200" />
      <circle cx="9.500" cy="7.800" r="1.200" fill="#333" />
    </svg>
    <div className="ml-auto h-full flex items-center">
      <span className="mr-[13px]">項目個數: 5</span>
      <button aria-label="標準模式" className="w-[32px] h-full flex items-center justify-center bg-[#dcdddc]">
        <svg viewBox="0 0 12 12" className="w-[12px] h-[12px]" fill="none" stroke="#333"><path d="M1 1h10v10H1zM1 4.300h10M1 7.700h10M4.300 1v10M7.700 1v10" /></svg>
      </button>
      <button aria-label="整頁模式" className="w-[32px] flex justify-center">
        <svg viewBox="0 0 12 12" className="w-[12px] h-[12px]" fill="none" stroke="#333"><path d="M.5 1h11v10H.500zM3 3h6v8H3zM4.500 5h3M4.500 7h3M4.500 9h3" /></svg>
      </button>
      <button aria-label="分頁預覽" className="w-[32px] flex justify-center">
        <svg viewBox="0 0 12 12" className="w-[12px] h-[12px]" fill="none" stroke="#333"><path d="M.5 1h11v10H.5zM4 1v6h7.500M7.500 1v6" /></svg>
      </button>
      <button aria-label="縮小" className="ml-[5px] mr-[5px] text-[#888]">−</button>
      <span className="relative flex items-center w-[80px]">
        <span className="absolute left-[39px] w-px h-[5px] bg-[#666]" />
        <input
          type="range"
          aria-label="顯示比例"
          min="0"
          max="100"
          defaultValue="62"
          className="w-full h-px appearance-none bg-[#666] [&::-webkit-slider-thumb]:appearance-none [&::-webkit-slider-thumb]:w-[4px] [&::-webkit-slider-thumb]:h-[9px] [&::-webkit-slider-thumb]:bg-[#444]"
        />
      </span>
      <button aria-label="放大" className="ml-[4px] mr-[10px] text-[#888]">+</button>
      <span>180%</span>
    </div>
  </footer>
);

const Watermark = () => (
  <div className="absolute right-[37px] bottom-[19px] z-10 flex items-center gap-[8px] text-white/80 drop-shadow-[0_0_2px_rgba(0,0,0,0.25)]">
    <svg viewBox="0 0 42 50" className="w-[42px] h-[50px]" fill="currentColor">
      <path d="M0 12 8 8v23l9 4V25h8v24L0 37z" />
      <path d="M17 0 41 13v21l-8 4V18l-8-4v7h-8z" />
    </svg>
    <span className="text-[35px] leading-[50px] font-bold">小黑盒</span>
  </div>
);

const App = () => (
  <div className="relative h-screen flex flex-col overflow-hidden bg-[#ebedeb] font-['Noto_Sans','Noto_Sans_CJK_TC',sans-serif] text-[#444]">
    <MacBar />
    <TitleBar />
    <TabRow />
    <Ribbon />
    <FormulaBar />
    <Sheet />
    <SheetTabs />
    <StatusBar />
    <Watermark />
    <p className="absolute left-1/2 -translate-x-1/2 bottom-[34px] z-20 h-[54px] px-[11px] rounded-[8px] bg-[#5f615f] font-['Noto_Sans_CJK_SC',sans-serif] text-[32px] leading-[54px] whitespace-nowrap text-white [text-shadow:2px_2px_1px_rgba(0,0,0,0.7)]">
      来将标题列套用绿色
    </p>
  </div>
);

export default App;
